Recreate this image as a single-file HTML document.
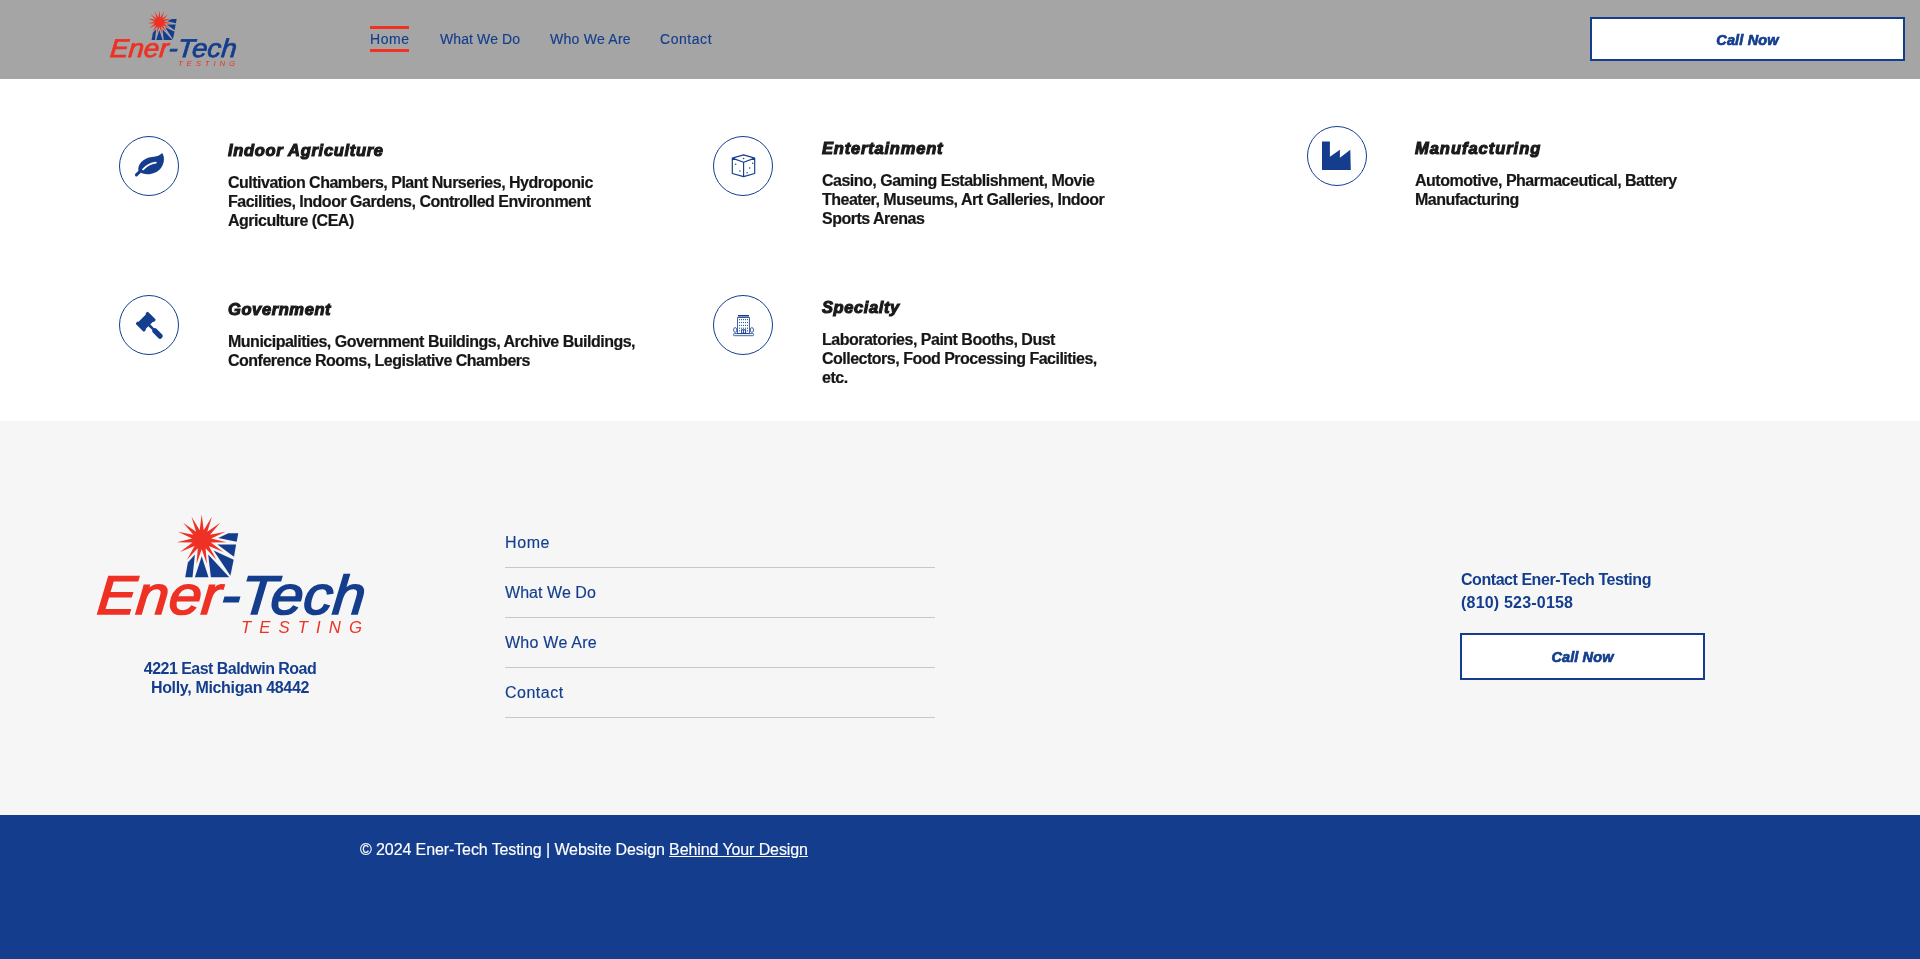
<!DOCTYPE html>
<html>
<head>
<meta charset="utf-8">
<style>
*{margin:0;padding:0;box-sizing:border-box;}
html,body{width:1920px;height:959px;overflow:hidden;background:#fff;font-family:"Liberation Sans",sans-serif;}
body>*{will-change:transform;}
.abs{position:absolute;}
#hdr{position:absolute;left:0;top:0;width:1920px;height:79px;background:#a5a5a5;}
.nav{position:absolute;top:30.7px;font-size:14px;line-height:17px;color:#143e8d;white-space:nowrap;-webkit-text-stroke:0.15px #143e8d;}
.nav.active::before,.nav.active::after{content:"";position:absolute;left:0;right:0.8px;height:3px;background:#f03222;}
.nav.active::before{top:-4.7px;}
.nav.active::after{top:18.3px;}
.btn{position:absolute;background:#fff;border:2px solid #143e8d;color:#143e8d;text-align:center;font-weight:bold;font-style:italic;white-space:nowrap;-webkit-text-stroke:0.7px #143e8d;}
#svc{position:absolute;left:0;top:79px;width:1920px;height:342px;background:#fff;}
.circ{position:absolute;width:60px;height:60px;border:1px solid #143e8d;border-radius:50%;}
.circ svg{position:absolute;left:-1px;top:-1px;width:60px;height:60px;}
.h{position:absolute;font-size:16.5px;font-weight:bold;font-style:italic;color:#1a1a1a;white-space:nowrap;line-height:20px;-webkit-text-stroke:1.1px #1a1a1a;letter-spacing:0.4px;}
.p{position:absolute;font-size:16px;font-weight:bold;color:#161616;-webkit-text-stroke:0.2px #161616;white-space:nowrap;line-height:19px;letter-spacing:-0.5px;}
#ftr{position:absolute;left:0;top:421px;width:1920px;height:394px;background:#f6f6f6;}
.fl{position:absolute;left:505px;width:430px;height:50px;border-bottom:1px solid #c8c8c8;}
.fl span{position:absolute;left:0;top:15.3px;font-size:16px;line-height:19px;color:#143e8d;letter-spacing:0.2px;white-space:nowrap;-webkit-text-stroke:0.15px #143e8d;}
#bar{position:absolute;left:0;top:815px;width:1920px;height:144px;background:#143e8d;}
</style>
</head>
<body>
<div id="hdr">
  <svg class="abs" style="left:109px;top:10.1px" width="127.5" height="56.7" viewBox="0 0 270 120"><use href="#logo"/></svg>
  <div class="nav active" style="left:370px;letter-spacing:0.6px;padding-right:0">Home</div>
  <div class="nav" style="left:440px;letter-spacing:0.1px">What We Do</div>
  <div class="nav" style="left:550px;letter-spacing:0.25px">Who We Are</div>
  <div class="nav" style="left:660px;letter-spacing:0.55px">Contact</div>
  <div class="btn" style="left:1590px;top:17px;width:315px;height:44px;font-size:14.5px;line-height:43px;letter-spacing:0.15px">Call Now</div>
</div>

<div id="svc"></div>
<div class="circ" style="left:119px;top:136px"><svg viewBox="-30 -30 60 60" id="ic-leaf"><path fill="#143e8d" d="M -10.4,5.4 C -12.2,-1 -5.8,-8.3 3,-9 C 8,-9.5 11,-10.8 13.2,-13 C 15.6,-9.5 15.8,-3.5 12.2,1.8 C 8.2,7.4 0,9.6 -6.2,7.6 Z"/><path d="M -9.2,5.6 L -12.6,8.9" stroke="#143e8d" stroke-width="3" stroke-linecap="round"/><path d="M -5.9,3.3 Q -0.5,-2.6 6.8,-3.4" stroke="#fff" stroke-width="1.9" fill="none" stroke-linecap="round"/></svg></div>
<div class="h" style="left:228px;top:140.3px;letter-spacing:0.69px">Indoor Agriculture</div>
<div class="p" style="left:228px;top:173px">Cultivation Chambers, Plant Nurseries, Hydroponic<br>Facilities, Indoor Gardens, Controlled Environment<br>Agriculture (CEA)</div>

<div class="circ" style="left:713px;top:136px"><svg viewBox="-30 -30 60 60" id="ic-dice"><g fill="none" stroke="#143e8d" stroke-width="1.15" stroke-linejoin="round"><path d="M 0.6,-11.1 L 11.7,-7.9 L 11.7,7.5 L 0.6,10.6 L -10.7,7.5 L -10.7,-7.9 Z M -10.7,-7.9 L 0.6,-3.75 L 11.7,-7.9 M 0.6,-3.75 L 0.6,10.6"/></g><g fill="#143e8d"><circle cx="0.6" cy="-7.4" r="0.75"/><circle cx="-7.3" cy="-1.7" r="0.75"/><circle cx="-3.1" cy="5" r="0.75"/><circle cx="9.75" cy="-2.8" r="0.75"/><circle cx="6.7" cy="1.9" r="0.75"/><circle cx="4.1" cy="6.75" r="0.75"/></g></svg></div>
<div class="h" style="left:822px;top:138.1px;letter-spacing:0.8px">Entertainment</div>
<div class="p" style="left:822px;top:170.6px">Casino, Gaming Establishment, Movie<br>Theater, Museums, Art Galleries, Indoor<br>Sports Arenas</div>

<div class="circ" style="left:1307px;top:126px"><svg viewBox="-30 -30 60 60" id="ic-fac"><polygon fill="#143e8d" points="-15,-14.4 -7.1,-14.4 -7.1,0.8 2.9,-6.3 2.9,1.7 13.3,-6.3 13.8,14 -15,14"/></svg></div>
<div class="h" style="left:1415px;top:138.3px;letter-spacing:0.97px">Manufacturing</div>
<div class="p" style="left:1415px;top:170.7px">Automotive, Pharmaceutical, Battery<br>Manufacturing</div>

<div class="circ" style="left:119px;top:295px"><svg viewBox="-30 -30 60 60" id="ic-gavel"><g transform="rotate(-45)" fill="#143e8d"><rect x="-7" y="-9.6" width="14" height="10" rx="0.8"/><rect x="-8.6" y="-10.6" width="3.4" height="12" rx="1.2"/><rect x="5.2" y="-10.6" width="3.4" height="12" rx="1.2"/><rect x="-1.25" y="0" width="2.5" height="7"/><rect x="-2.6" y="5.8" width="5.2" height="12.4" rx="2.2"/></g></svg></div>
<div class="h" style="left:228px;top:299.3px;letter-spacing:0.6px">Government</div>
<div class="p" style="left:228px;top:331.5px">Municipalities, Government Buildings, Archive Buildings,<br>Conference Rooms, Legislative Chambers</div>

<div class="circ" style="left:713px;top:295px"><svg viewBox="-30 -30 60 60" id="ic-bld"><g fill="none" stroke="#143e8d" stroke-width="0.8"><rect x="-5.4" y="-7.4" width="11.9" height="15.8"/><rect x="-9.4" y="8.6" width="19.9" height="2.1" rx="0.7"/><ellipse cx="-7.8" cy="5" rx="1.6" ry="2.4"/><ellipse cx="8.9" cy="5" rx="1.6" ry="2.4"/><path d="M -5,-8.1 H 6"/></g><g fill="#143e8d"><rect x="-5" y="-10" width="11" height="1.1"/><rect x="-1.9" y="4.3" width="5" height="4.3"/><rect x="-4.05" y="-5.95" width="0.9" height="1.1"/><rect x="-4.05" y="-3.05" width="0.9" height="1.1"/><rect x="-4.05" y="-0.15" width="0.9" height="1.1"/><rect x="-4.05" y="2.65" width="0.9" height="1.1"/><rect x="-2.05" y="-5.95" width="0.9" height="1.1"/><rect x="-2.05" y="-3.05" width="0.9" height="1.1"/><rect x="-2.05" y="-0.15" width="0.9" height="1.1"/><rect x="-2.05" y="2.65" width="0.9" height="1.1"/><rect x="0.05" y="-5.95" width="0.9" height="1.1"/><rect x="0.05" y="-3.05" width="0.9" height="1.1"/><rect x="0.05" y="-0.15" width="0.9" height="1.1"/><rect x="0.05" y="2.65" width="0.9" height="1.1"/><rect x="2.05" y="-5.95" width="0.9" height="1.1"/><rect x="2.05" y="-3.05" width="0.9" height="1.1"/><rect x="2.05" y="-0.15" width="0.9" height="1.1"/><rect x="2.05" y="2.65" width="0.9" height="1.1"/><rect x="4.05" y="-5.95" width="0.9" height="1.1"/><rect x="4.05" y="-3.05" width="0.9" height="1.1"/><rect x="4.05" y="-0.15" width="0.9" height="1.1"/><rect x="4.05" y="2.65" width="0.9" height="1.1"/><rect x="-4.05" y="5.25" width="0.9" height="1.1"/><rect x="4.05" y="5.25" width="0.9" height="1.1"/></g><g fill="#fff"><rect x="-1.1" y="5.3" width="1.2" height="2.4" rx="0.5"/><rect x="0.9" y="5.3" width="1.2" height="2.4" rx="0.5"/></g></svg></div>
<div class="h" style="left:822px;top:297.3px;letter-spacing:0.6px">Specialty</div>
<div class="p" style="left:822px;top:329.6px">Laboratories, Paint Booths, Dust<br>Collectors, Food Processing Facilities,<br>etc.</div>

<div id="ftr"></div>
<svg class="abs" style="left:95px;top:514px" width="270" height="120" viewBox="0 0 270 120"><use href="#logo"/></svg>
<div class="abs addr" style="left:130px;top:658.9px;width:200px;text-align:center;font-size:16px;font-weight:bold;line-height:19.1px;color:#143e8d;white-space:nowrap"><span style="letter-spacing:-0.53px">4221 East Baldwin Road</span><br><span style="letter-spacing:-0.33px">Holly, Michigan 48442</span></div>
<div class="fl" style="top:518px"><span style="letter-spacing:0.6px">Home</span></div>
<div class="fl" style="top:568px"><span style="letter-spacing:0.05px">What We Do</span></div>
<div class="fl" style="top:618px"><span style="letter-spacing:0.25px">Who We Are</span></div>
<div class="fl" style="top:668px"><span style="letter-spacing:0.5px">Contact</span></div>
<div class="abs" style="left:1461px;top:569.4px;font-size:16px;font-weight:bold;line-height:22.7px;color:#143e8d;white-space:nowrap"><span style="letter-spacing:-0.45px">Contact Ener-Tech Testing</span><br><span style="letter-spacing:0.2px">(810) 523-0158</span></div>
<div class="btn" style="left:1460px;top:633px;width:245px;height:47px;font-size:14.5px;line-height:45px;border-width:2.5px;letter-spacing:0.1px">Call Now</div>

<div id="bar"></div>
<div class="abs" style="left:360px;top:840px;font-size:16px;line-height:19px;color:#fff;white-space:nowrap;letter-spacing:-0.1px;-webkit-text-stroke:0.15px #fff">© 2024 Ener-Tech Testing | Website Design <span style="text-decoration:underline">Behind Your Design</span></div>


<svg width="0" height="0" style="position:absolute">
  <defs>
    <g id="logo">
      <g fill="#143e8d">
        <polygon points="123.2,24.0 133.3,19.15 143.3,19.15 141.7,27.8"/>
        <polygon points="122.4,30.5 141.1,30.5 139.0,42.7"/>
        <polygon points="118.6,36.5 138.7,45.7 135.4,61.7"/>
        <polygon points="113.2,40.6 134.3,63.3 115.9,63.3"/>
        <polygon points="106.7,42.2 113.5,63.3 99.9,63.3"/>
        <polygon points="99.9,40.6 97.5,63.3 90.2,63.3 92.9,48.4"/>
      </g>
      <polygon fill="#ee3124" points="106.70,0.60 108.70,16.21 116.87,2.76 112.34,17.83 125.28,8.87 115.01,20.80 130.48,17.87 116.25,24.60 131.56,28.21 115.83,28.57 128.35,38.10 113.83,32.02 121.39,45.83 110.60,34.37 111.90,50.05 106.70,35.20 101.50,50.05 102.80,34.37 92.01,45.83 99.57,32.02 85.05,38.10 97.57,28.57 81.84,28.21 97.15,24.60 82.92,17.87 98.39,20.80 88.12,8.87 101.06,17.83 96.53,2.76 104.70,16.21"/>
      <text transform="translate(8.8,0) skewX(-5)" x="1" y="100.2" font-family="Liberation Sans" font-style="italic" font-size="54.5" stroke-width="1.6" stroke-linejoin="miter" textLength="268" lengthAdjust="spacingAndGlyphs"><tspan fill="#ee3124" stroke="#ee3124">Ener</tspan><tspan fill="#143e8d" stroke="#143e8d">-Tech</tspan></text>
      <text x="146" y="119.4" font-family="Liberation Sans" font-style="italic" font-size="16.7" fill="#ee3124" textLength="121" lengthAdjust="spacing">TESTING</text>
    </g>
  </defs>
</svg>
</body>
</html>
